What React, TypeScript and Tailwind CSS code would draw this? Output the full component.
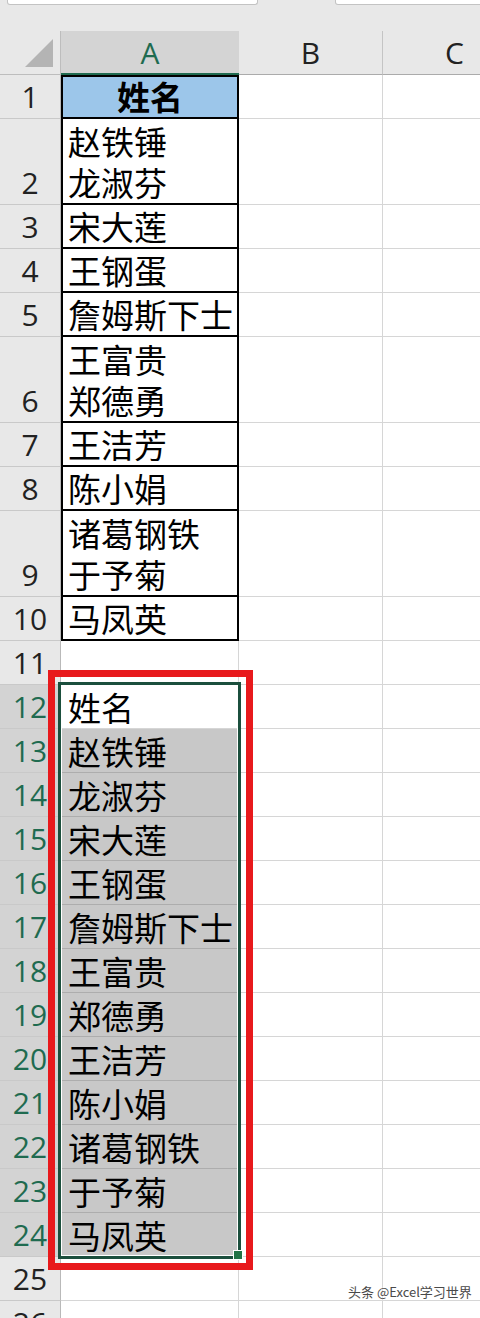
import React from 'react';

type Row = {
  n: number;
  lines: string[];
  tall?: boolean;
};

const topRows: Row[] = [
  { n: 1, lines: ['姓名'] },
  { n: 2, lines: ['赵铁锤', '龙淑芬'], tall: true },
  { n: 3, lines: ['宋大莲'] },
  { n: 4, lines: ['王钢蛋'] },
  { n: 5, lines: ['詹姆斯下士'] },
  { n: 6, lines: ['王富贵', '郑德勇'], tall: true },
  { n: 7, lines: ['王洁芳'] },
  { n: 8, lines: ['陈小娟'] },
  { n: 9, lines: ['诸葛钢铁', '于予菊'], tall: true },
  { n: 10, lines: ['马凤英'] },
];

const listed = ['姓名', '赵铁锤', '龙淑芬', '宋大莲', '王钢蛋', '詹姆斯下士', '王富贵', '郑德勇', '王洁芳', '陈小娟', '诸葛钢铁', '于予菊', '马凤英'];

const cjk = "font-['Noto_Sans_CJK_SC','Noto_Sans',sans-serif]";
const num = "font-['Open_Sans','Noto_Sans',sans-serif]";

function RowHead({ n, tall, selected }: { n: number; tall?: boolean; selected?: boolean }) {
  return (
    <div
      className={`flex w-[61px] shrink-0 items-end justify-center border-r border-b border-r-[#b9b9b9] border-b-[#c9c9c9] pb-[1px] text-[30px] leading-[40px] ${num} ${
        tall ? 'h-[86px]' : 'h-[44px]'
      } ${selected ? 'bg-[#d3d3d3] text-[#1f6b50]' : 'bg-[#e8e8e8] text-[#222]'}`}
    >
      {n}
    </div>
  );
}

function EmptyCells() {
  return (
    <>
      <div className="w-[144px] shrink-0 border-r border-b border-[#d6d6d6] bg-white" />
      <div className="w-[144px] shrink-0 border-r border-b border-[#d6d6d6] bg-white" />
    </>
  );
}

function TopRow({ row }: { row: Row }) {
  const header = row.n === 1;
  return (
    <div className="flex">
      <RowHead n={row.n} tall={row.tall} />
      <div
        className={`flex w-[178px] shrink-0 flex-col justify-end border-x-2 border-b-2 border-black ${header ? 'items-center border-t-2 bg-[#9cc6ea] font-bold' : 'bg-white pl-[5px]'} ${
          row.tall ? 'h-[86px]' : 'h-[44px]'
        } text-[33px] leading-[41px] text-black ${cjk}`}
      >
        {row.lines.map((l) => (
          <span key={l} className="whitespace-nowrap">
            {l}
          </span>
        ))}
      </div>
      <EmptyCells />
    </div>
  );
}

function ListRow({ n, name, first }: { n: number; name: string; first: boolean }) {
  return (
    <div className="flex h-[44px]">
      <RowHead n={n} selected />
      <div
        className={`flex w-[178px] shrink-0 items-end border-r border-b border-r-[#d6d6d6] pl-[7px] text-[33px] leading-[42px] text-black ${cjk} ${
          first ? 'border-b-[#d6d6d6] bg-white' : 'border-b-[#adadad] bg-[#c8c8c8]'
        }`}
      >
        <span className="whitespace-nowrap">{name}</span>
      </div>
      <EmptyCells />
    </div>
  );
}

function PlainRow({ n }: { n: number }) {
  return (
    <div className="flex h-[44px]">
      <RowHead n={n} />
      <div className="w-[178px] shrink-0 border-r border-b border-[#d6d6d6] bg-white" />
      <EmptyCells />
    </div>
  );
}

export default function App() {
  return (
    <div className="relative h-[1318px] w-[480px] overflow-hidden bg-white">
      {/* toolbar strip */}
      <div className="relative h-[31px] bg-[#e8e8e8]">
        <div className="absolute left-[7px] top-0 h-[5px] w-[251px] rounded-b-[3px] border-x border-b border-[#c3c3c3] bg-white" />
        <div className="absolute left-[335px] top-0 h-[5px] w-[150px] rounded-b-[3px] border-x border-b border-[#c3c3c3] bg-white" />
      </div>

      {/* column headers */}
      <div className={`flex h-[44px] text-[30px] ${num}`}>
        <div className="flex w-[61px] shrink-0 items-end justify-end border-r border-b border-[#bdbdbd] bg-[#e8e8e8] pb-[7px] pr-[7px]">
          <svg width="28" height="28" viewBox="0 0 28 28">
            <polygon points="28,0 28,28 0,28" fill="#b4b4b4" />
          </svg>
        </div>
        <div className="flex w-[178px] shrink-0 items-center justify-center border-b-2 border-[#1f6b50] bg-[#d4d4d4] text-[#1f6b50]">A</div>
        <div className="flex w-[144px] shrink-0 items-center justify-center border-r border-b border-r-[#c4c4c4] border-b-[#ababab] bg-[#e8e8e8] text-[#222]">
          B
        </div>
        <div className="flex w-[144px] shrink-0 items-center justify-center border-r border-b border-r-[#c4c4c4] border-b-[#ababab] bg-[#e8e8e8] text-[#222]">
          C
        </div>
      </div>

      {topRows.map((r) => (
        <TopRow key={r.n} row={r} />
      ))}
      <PlainRow n={11} />
      {listed.map((name, i) => (
        <ListRow key={name} n={12 + i} name={name} first={i === 0} />
      ))}
      <PlainRow n={25} />
      <PlainRow n={26} />

      {/* selection border and fill handle */}
      <div className="absolute left-[58px] top-[682px] h-[577px] w-[183px] border-[3px] border-[#1b4f3d] shadow-[inset_0_0_0_1px_#ffffff]" />
      <div className="absolute left-[233px] top-[1250px] h-[10px] w-[10px] border border-white bg-[#217346]" />

      {/* red highlight box */}
      <div className="absolute left-[48px] top-[670px] h-[600px] w-[205px] border-[7px] border-[#e8191c]" />

      {/* watermark */}
      <div className={`absolute left-[348px] top-[1282px] whitespace-nowrap text-[13px] text-[#4a4a4a] [text-shadow:0_0_2px_#fff,0_0_2px_#fff] ${cjk}`}>
        头条 @Excel学习世界
      </div>
    </div>
  );
}
